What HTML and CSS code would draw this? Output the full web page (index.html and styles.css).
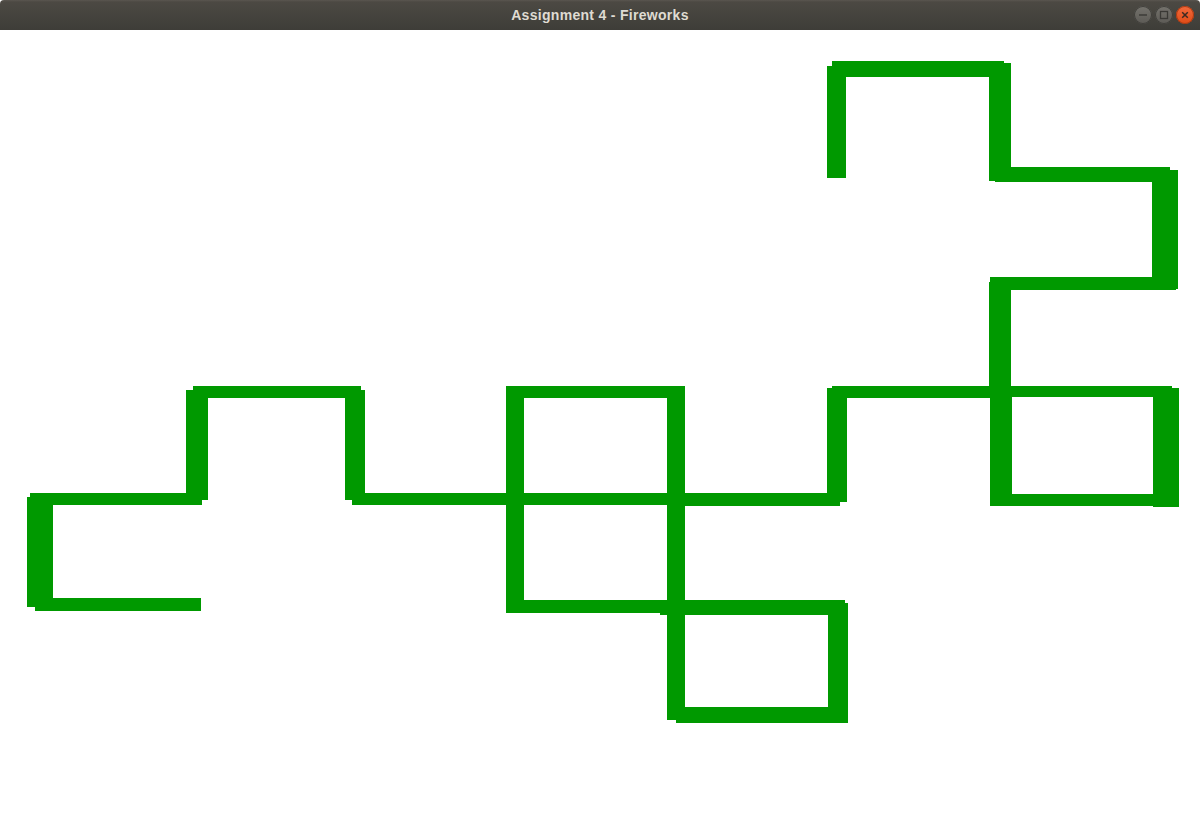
FILE: index.html
```html
<!DOCTYPE html>
<html>
<head>
<meta charset="utf-8">
<title>Assignment 4 - Fireworks</title>
<link rel="stylesheet" href="styles.css">
</head>
<body>
<div class="window">
  <div class="titlebar">
    <div class="title">Assignment 4 - Fireworks</div>
    <div class="controls">
      <span class="btn btn-min"><svg width="18" height="18" viewBox="0 0 18 18"><line x1="5" y1="9" x2="13" y2="9" stroke="#3a3935" stroke-width="1.4"/></svg></span>
      <span class="btn btn-max"><svg width="18" height="18" viewBox="0 0 18 18"><rect x="5.5" y="5.5" width="7" height="7" fill="none" stroke="#3a3935" stroke-width="1.3"/></svg></span>
      <span class="btn btn-close"><svg width="18" height="18" viewBox="0 0 18 18"><path d="M6.2 6.2 L11.8 11.8 M11.8 6.2 L6.2 11.8" stroke="#3b2a22" stroke-width="1.5"/></svg></span>
    </div>
  </div>
  <div class="canvas">
    <svg class="drawing" width="1200" height="800" viewBox="0 30 1200 800">
      <g fill="#009900">
        <rect x="827" y="66" width="19" height="112"/>
        <rect x="832" y="61" width="172" height="16"/>
        <rect x="989" y="63" width="22" height="118"/>
        <rect x="995" y="167" width="175" height="15"/>
        <rect x="1152" y="170" width="26" height="119"/>
        <rect x="990" y="277" width="186" height="13"/>
        <rect x="989" y="282" width="22" height="112"/>
        <rect x="990" y="386" width="22" height="120"/>
        <rect x="995" y="494" width="177" height="12"/>
        <rect x="1153" y="388" width="26" height="119"/>
        <rect x="990" y="386" width="182" height="11"/>
        <rect x="832" y="386" width="168" height="12"/>
        <rect x="827" y="388" width="20" height="114"/>
        <rect x="676" y="493" width="164" height="13"/>
        <rect x="516" y="493" width="160" height="12"/>
        <rect x="352" y="493" width="164" height="12"/>
        <rect x="345" y="390" width="20" height="110"/>
        <rect x="193" y="386" width="168" height="12"/>
        <rect x="186" y="390" width="22" height="110"/>
        <rect x="30" y="493" width="172" height="12"/>
        <rect x="27" y="497" width="26" height="110"/>
        <rect x="35" y="598" width="166" height="13"/>
        <rect x="510" y="386" width="175" height="12"/>
        <rect x="667" y="388" width="18" height="332"/>
        <rect x="676" y="707" width="172" height="16"/>
        <rect x="828" y="603" width="20" height="117"/>
        <rect x="660" y="600" width="185" height="15"/>
        <rect x="506" y="600" width="170" height="13"/>
        <rect x="506" y="386" width="18" height="226"/>
      </g>
    </svg>
  </div>
</div>
</body>
</html>
```

FILE: styles.css
```css
html, body {
  margin: 0;
  padding: 0;
  background: #ffffff;
  overflow: hidden;
}

.window {
  width: 1200px;
  height: 830px;
  display: flex;
  flex-direction: column;
}

.titlebar {
  position: relative;
  height: 30px;
  flex: 0 0 30px;
  background: linear-gradient(#5a5650 0px, #4c4943 2px, #3e3d38 30px);
  display: flex;
  align-items: center;
  justify-content: center;
  box-sizing: border-box;
  border-top-left-radius: 4px;
  border-top-right-radius: 4px;
}

.title {
  font-family: "Liberation Sans", Arial, sans-serif;
  font-weight: bold;
  font-size: 14px;
  color: #dfdbd2;
  letter-spacing: 0.3px;
}

.controls {
  position: absolute;
  right: 6px;
  top: 6px;
  display: flex;
  gap: 3px;
}

.btn {
  width: 18px;
  height: 18px;
  border-radius: 50%;
  display: flex;
  align-items: center;
  justify-content: center;
  box-sizing: border-box;
}

.btn-min, .btn-max {
  background: linear-gradient(#75736d, #5c5a55);
  box-shadow: inset 0 0 0 1px #3f3e3a;
}

.btn-close {
  background: linear-gradient(#f26a3d, #df4b16);
  box-shadow: inset 0 0 0 1px #a93a12;
}

.canvas {
  flex: 1 1 auto;
  background: #ffffff;
}

.drawing {
  display: block;
}
```
